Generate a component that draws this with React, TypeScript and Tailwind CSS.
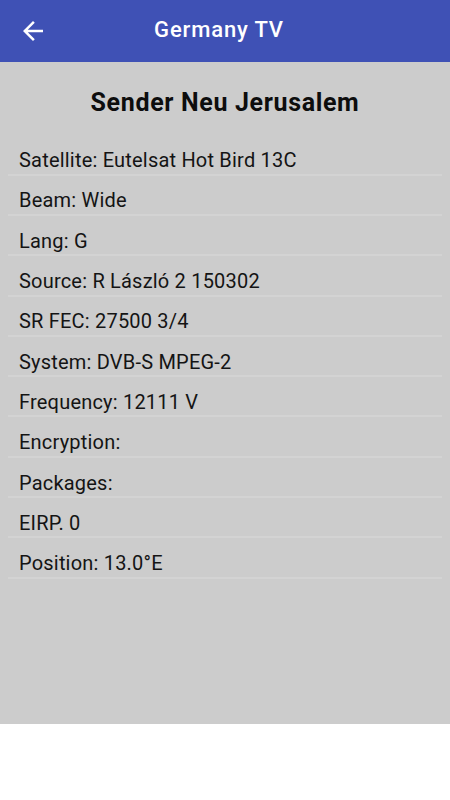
import React from "react";

const rows = [
  "Satellite: Eutelsat Hot Bird 13C",
  "Beam: Wide",
  "Lang: G",
  "Source: R László 2 150302",
  "SR FEC: 27500 3/4",
  "System: DVB-S MPEG-2",
  "Frequency: 12111 V",
  "Encryption:",
  "Packages:",
  "EIRP. 0",
  "Position: 13.0°E",
];

export default function App() {
  return (
    <div className="w-[450px] h-[800px] bg-white flex flex-col" style={{ fontFamily: "Roboto, 'Liberation Sans', sans-serif" }}>
      <header className="h-[62px] bg-[#3f51b5] flex items-center shrink-0">
        <div className="w-[60px] flex items-center pl-[18px]">
          <svg width="30" height="30" viewBox="0 0 24 24" fill="#ffffff">
            <path d="M20 11H7.83l5.59-5.59L12 4l-8 8 8 8 1.41-1.41L7.83 13H20v-2z" />
          </svg>
        </div>
        <div className="flex-1 text-center text-white text-[22px] tracking-[0.85px] font-medium mr-[72px] mb-[3px] leading-[28px]">Germany TV</div>
      </header>
      <main className="h-[662px] bg-[#cccccc] flex flex-col">
        <h1 className="pt-[26.2px] pb-[17px] text-center text-[25px] tracking-[0.65px] leading-[30px] font-bold text-[#0d0d0d]">Sender Neu Jerusalem</h1>
        <div className="flex flex-col">
          {rows.map((r) => (
            <div key={r} className="flex flex-col pt-[12.7px]">
              <div className="px-[19px] text-[20px] tracking-[0.2px] leading-[24px] text-[#141414]">{r}</div>
              <div className="mt-[1.65px] mx-[8px] h-[2px] bg-[#d3d3d3]" />
            </div>
          ))}
        </div>
      </main>
    </div>
  );
}
